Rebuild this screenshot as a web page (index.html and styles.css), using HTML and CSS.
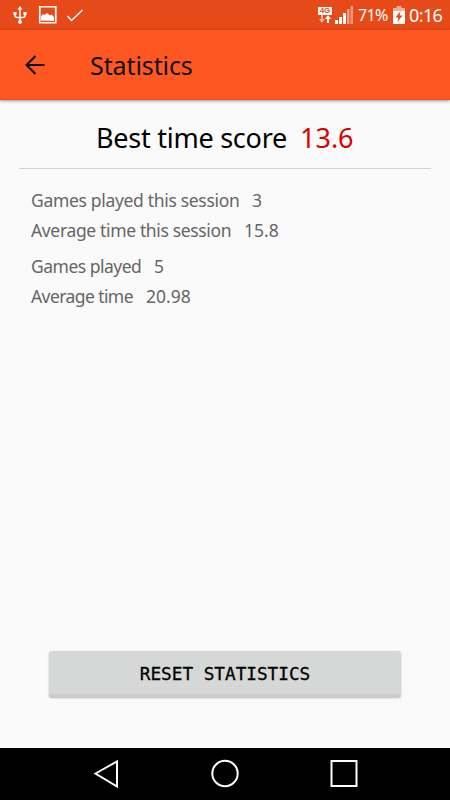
FILE: index.html
```html
<!DOCTYPE html>
<html lang="en">
<head>
<meta charset="utf-8">
<title>Statistics</title>
<link rel="stylesheet" href="styles.css">
</head>
<body>
<div class="screen">
  <div class="status">
    <svg class="status-left" width="100" height="30" viewBox="0 0 100 30" fill="none" stroke="#fff">
      <path d="M20 8v14M15 13v2.500q0 2 2.500 2h5q2.500 0 2.500-2V13" stroke-width="1.500"/>
      <path d="M17.500 9.500L20 6l2.500 3.500zM13.500 12h3v3h-3zM23.500 12h3v3h-3z" fill="#fff" stroke="none"/>
      <circle cx="20" cy="22" r="2" fill="#fff" stroke="none"/>
      <path d="M39.750 6.750h16v16h-16z" stroke-width="1.700"/>
      <path d="M41 20.500v-4l2-2.500 1.500 1 2.500-2 3 2.500 1.500-1 2.500 2.500v4z" fill="#fff" stroke="none"/>
      <path d="M67.500 16l4 4.500L82.500 10" stroke-width="1.500"/>
    </svg>
    <div class="status-right">
      <div class="network">
        <span class="lte">4G</span>
        <svg width="14" height="9" viewBox="0 0 14 9"><path d="M3 0h2v4h2L4 8 1 4h2z" fill="#fff" opacity=".6"/><path d="M9 8V4H7l3-4 3 4h-2v4z" fill="#fff"/></svg>
      </div>
      <svg class="signal" width="18" height="18" viewBox="0 0 18 18" fill="#fff"><path d="M0 14h3v4H0zM4 11h3v7H4zM8 7h3v11H8z"/><path d="M12 3h2.500v15H12zM15.500 0H18v18h-2.500z" opacity=".45"/></svg>
      <span class="percent">71%</span>
      <svg class="battery" width="12" height="18" viewBox="0 0 12 18"><path d="M3.500 0h5v2H12v4H0V2h3.500z" fill="#fff" opacity=".55"/><path d="M0 5h12v13H0z" fill="#fff"/><path d="M7.500 5L2.500 11.500h2.800L4.500 16l5-6.500H6.700z" fill="#e64a19"/></svg>
      <span class="clock">0:16</span>
    </div>
  </div>
  <header class="toolbar">
    <svg class="back" width="20" height="20" viewBox="0 0 20 20" fill="none" stroke="#111" stroke-width="2.100"><path d="M19.500 10H2M10.500 1L1.500 10l9 9"/></svg>
    <h1 class="title">Statistics</h1>
  </header>
  <main class="content">
    <div class="best"><span class="best-label">Best time score</span><span class="best-value">13.6</span></div>
    <div class="stats">
      <div class="row"><span class="l1">Games played this session</span><span class="v1">3</span></div>
      <div class="row"><span class="l2">Average time this session</span><span class="v2">15.8</span></div>
      <div class="row gap"><span class="l3">Games played</span><span class="v3">5</span></div>
      <div class="row"><span class="l4">Average time</span><span class="v4">20.98</span></div>
    </div>
    <button class="reset">RESET STATISTICS</button>
  </main>
  <nav class="navbar">
    <svg width="450" height="52" viewBox="0 0 450 52" fill="none" stroke="#fff" stroke-width="2"><path d="M95.500 25.500L117 13.500v25z"/><circle cx="225" cy="25.500" r="12.700"/><path d="M331.500 13h25v25h-25z"/></svg>
  </nav>
</div>
</body>
</html>
```

FILE: styles.css
```css
* { box-sizing: border-box; }
body { margin: 0; font-family: "Noto Sans", sans-serif; }
.screen { width: 450px; height: 800px; display: flex; flex-direction: column; background: #fafafa; overflow: hidden; }
.status { height: 30px; flex: none; background: #e64a19; color: #fff; display: flex; justify-content: space-between; }
.status-right { display: flex; padding-right: 7px; white-space: nowrap; }
.network { width: 14px; margin: 7px 3px 0 0; display: flex; flex-direction: column; }
.lte { height: 8px; background: #fff; color: #e64a19; border-radius: 1px; font: bold 8px/8px "Liberation Sans", sans-serif; text-align: center; }
.signal { margin-top: 6px; }
.percent { width: 30px; margin-left: 5px; font-size: 16px; line-height: 31px; letter-spacing: -0.7px; }
.battery { margin: 6px 4px 0 5px; }
.clock { width: 34px; font-size: 18px; line-height: 31px; letter-spacing: -0.6px; }
.toolbar { height: 70px; flex: none; background: #ff5722; border-bottom: 1px solid #ed4b18; box-shadow: 0 1px 3px rgba(0,0,0,.4); display: flex; align-items: center; padding-left: 25px; position: relative; }
.title { margin: 1px 0 0 45px; font-size: 25px; line-height: 34px; font-weight: 400; letter-spacing: -0.1px; color: #111; white-space: nowrap; }
.content { flex: 1; display: flex; flex-direction: column; padding: 0 19px; }
.best { height: 69px; border-bottom: 1px solid #d2d2d2; padding-left: 77px; display: flex; font-size: 27px; line-height: 76px; color: #000; white-space: nowrap; }
.best-label { width: 204px; letter-spacing: -0.25px; }
.best-value { color: #d80000; }
.stats { padding: 16px 0 0 12px; font-size: 17.500px; color: #666; }
.row { height: 30px; line-height: 30px; display: flex; white-space: nowrap; }
.gap { margin-top: 6px; }
.l1 { width: 221px; letter-spacing: -0.32px; }
.l2 { width: 213px; letter-spacing: -0.35px; }
.l3 { width: 123px; letter-spacing: -0.5px; }
.l4 { width: 115px; letter-spacing: -0.58px; }
.reset { margin: auto 30px 51px; height: 46px; padding: 2px 0 0; border: 0; border-bottom: 3px solid #cbcccb; border-radius: 3px; background: #d6d8d7; box-shadow: 0 1px 2px rgba(0,0,0,.28); color: #000; font: 17.700px "DejaVu Sans Mono", monospace; -webkit-text-stroke: 0.3px #000; }
.navbar { height: 52px; flex: none; background: #000; }
.navbar svg { display: block; }
```
